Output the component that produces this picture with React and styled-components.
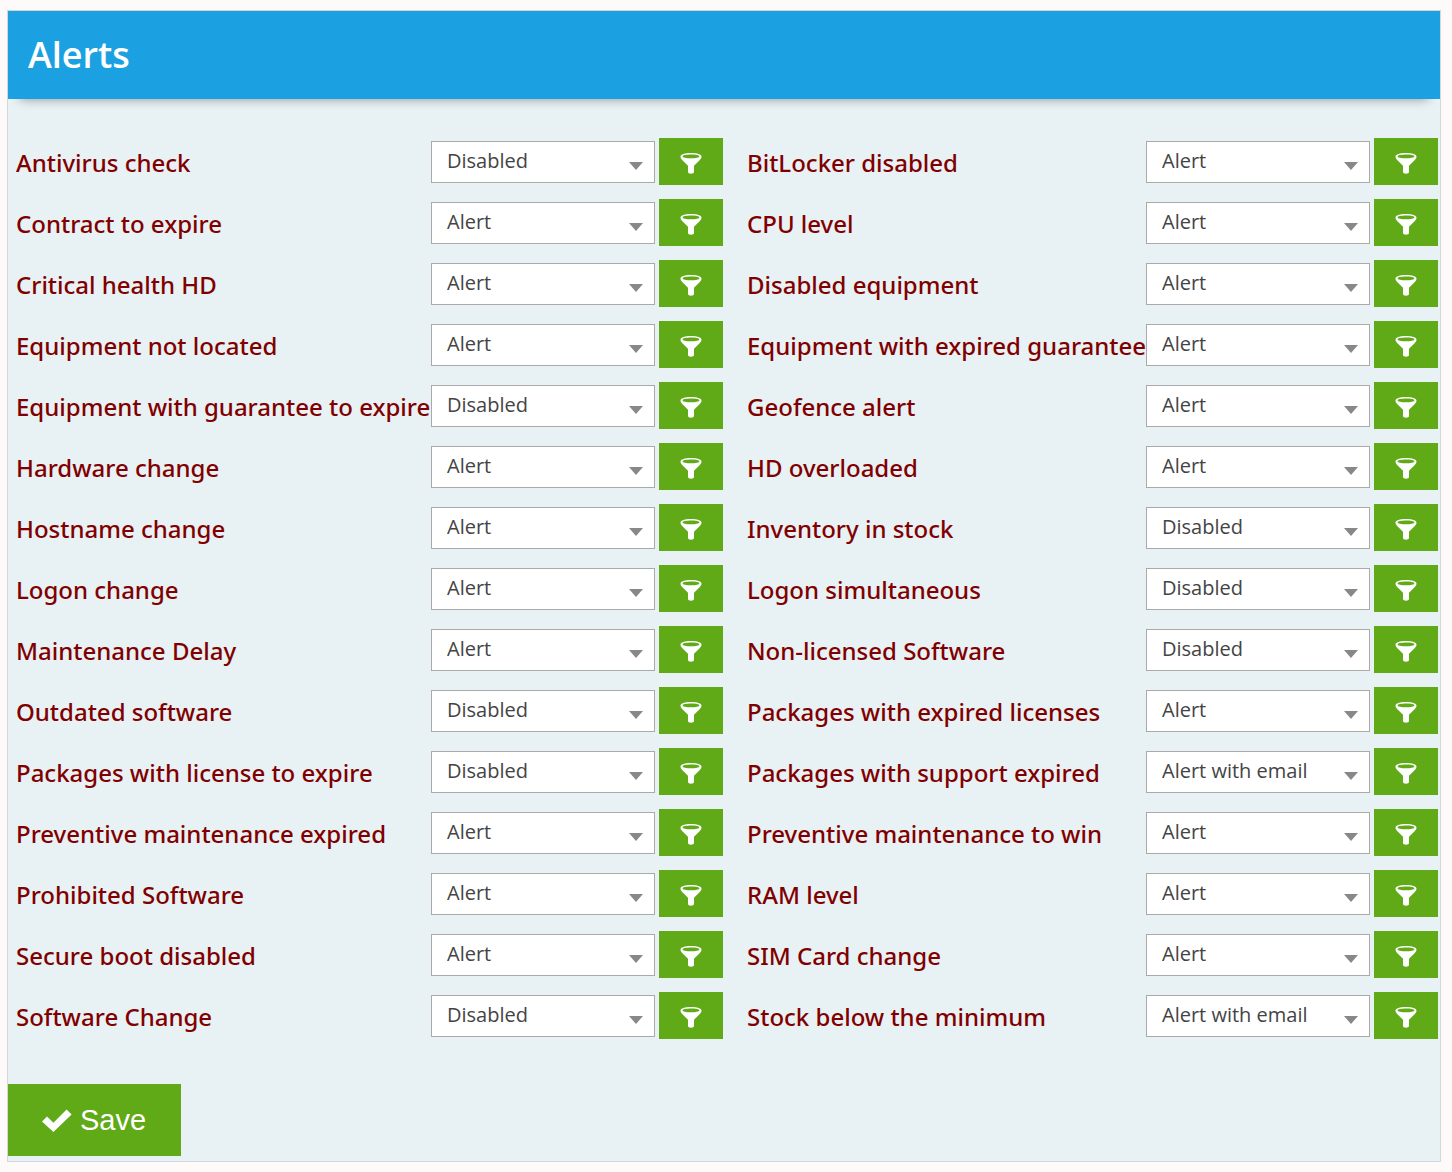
import React, { useState } from "react";
import styled, { createGlobalStyle } from "styled-components";

const OPTIONS = ["Disabled", "Alert", "Alert with email"];

const ALERTS = [
  { label: "Antivirus check", value: "Disabled" },
  { label: "BitLocker disabled", value: "Alert" },
  { label: "Contract to expire", value: "Alert" },
  { label: "CPU level", value: "Alert" },
  { label: "Critical health HD", value: "Alert" },
  { label: "Disabled equipment", value: "Alert" },
  { label: "Equipment not located", value: "Alert" },
  { label: "Equipment with expired guarantee", value: "Alert" },
  { label: "Equipment with guarantee to expire", value: "Disabled" },
  { label: "Geofence alert", value: "Alert" },
  { label: "Hardware change", value: "Alert" },
  { label: "HD overloaded", value: "Alert" },
  { label: "Hostname change", value: "Alert" },
  { label: "Inventory in stock", value: "Disabled" },
  { label: "Logon change", value: "Alert" },
  { label: "Logon simultaneous", value: "Disabled" },
  { label: "Maintenance Delay", value: "Alert" },
  { label: "Non-licensed Software", value: "Disabled" },
  { label: "Outdated software", value: "Disabled" },
  { label: "Packages with expired licenses", value: "Alert" },
  { label: "Packages with license to expire", value: "Disabled" },
  { label: "Packages with support expired", value: "Alert with email" },
  { label: "Preventive maintenance expired", value: "Alert" },
  { label: "Preventive maintenance to win", value: "Alert" },
  { label: "Prohibited Software", value: "Alert" },
  { label: "RAM level", value: "Alert" },
  { label: "Secure boot disabled", value: "Alert" },
  { label: "SIM Card change", value: "Alert" },
  { label: "Software Change", value: "Disabled" },
  { label: "Stock below the minimum", value: "Alert with email" },
];

const FunnelIcon = () => (
  <svg width="22" height="22" viewBox="0 0 22 22" aria-hidden="true">
    <path
      fill="#fff"
      fillRule="evenodd"
      d="M11 1C17 1 21.5 2.4 21.5 4.6C21.5 6 20.8 7 19.6 8.2L14 13.8V20C14 21.2 12.6 21.7 11 21.7C9.4 21.7 8 21.2 8 20V13.8L2.4 8.2C1.2 7 0.5 6 0.5 4.6C0.5 2.4 5 1 11 1ZM11 2.6C6.2 2.6 2.6 3.4 2.6 4.4C2.6 5.4 6.2 6.2 11 6.2C15.8 6.2 19.4 5.4 19.4 4.4C19.4 3.4 15.8 2.6 11 2.6Z"
    />
  </svg>
);

const CheckIcon = () => (
  <svg width="30" height="24" viewBox="0 0 30 24" aria-hidden="true">
    <path fill="#fff" d="M0 13.5L5 8.5L11.4 14.8L24.6 1.6L29.6 6.6L11.4 24Z" />
  </svg>
);

const AlertRow = ({ label, initialValue }) => {
  const [value, setValue] = useState(initialValue);
  const id = label.toLowerCase().replace(/\s+/g, "-");

  return (
    <Row>
      <Label htmlFor={id}>{label}</Label>
      <SelectWrapper>
        <Select id={id} value={value} onChange={(e) => setValue(e.target.value)}>
          {OPTIONS.map((option) => (
            <option key={option}>{option}</option>
          ))}
        </Select>
        <Arrow />
      </SelectWrapper>
      <FilterButton type="button" aria-label={`Filter ${label}`}>
        <FunnelIcon />
      </FilterButton>
    </Row>
  );
};

const App = () => {
  return (
    <>
      <GlobalStyle />
      <Panel>
        <Header>
          <Title>Alerts</Title>
        </Header>
        <form onSubmit={(e) => e.preventDefault()}>
          <AlertsGrid>
            {ALERTS.map(({ label, value }) => (
              <AlertRow key={label} label={label} initialValue={value} />
            ))}
          </AlertsGrid>
          <SaveButton type="submit">
            <CheckIcon />
            Save
          </SaveButton>
        </form>
      </Panel>
    </>
  );
};

export default App;

const GlobalStyle = createGlobalStyle`
  * {
    box-sizing: border-box;
  }
  body {
    margin: 0;
    background-color: #fffafa;
    font-family: "Open Sans", "Noto Sans", sans-serif;
  }
`;

const Panel = styled.main`
  margin: 10px 11px 10px 7px;
  padding-bottom: 5px;
  border: 1px solid #d3d6d9;
  background-color: #e8f1f4;
`;

const Header = styled.header`
  display: flex;
  align-items: center;
  height: 88px;
  padding: 0 20px;
  background-color: #1ba1e2;
  box-shadow: 0 12px 10px -12px rgba(0, 0, 0, 0.4);
`;

const Title = styled.h1`
  margin: 0;
  color: #fff;
  font-size: 36px;
  font-weight: 600;
  line-height: 48px;
`;

const AlertsGrid = styled.div`
  display: grid;
  grid-template-columns: 707fr 691fr;
  gap: 14px 24px;
  padding: 39px 2px 45px 8px;
`;

const Row = styled.div`
  display: grid;
  grid-template-columns: minmax(0, 1fr) 224px 64px;
  align-items: center;
  column-gap: 4px;
`;

const Label = styled.label`
  padding-top: 2px;
  color: #800000;
  font-family: "Noto Sans", sans-serif;
  font-size: 24px;
  font-weight: 500;
  line-height: 32px;
  white-space: nowrap;
`;

const SelectWrapper = styled.div`
  position: relative;
`;

const Select = styled.select`
  display: block;
  width: 100%;
  height: 42px;
  padding: 0 40px 2px 15px;
  appearance: none;
  border: 1px solid #aaa;
  border-radius: 0;
  background-color: #fff;
  color: #444;
  font-family: inherit;
  font-size: 20px;
  font-weight: 400;
`;

const Arrow = styled.span`
  position: absolute;
  top: 21px;
  right: 12px;
  border: 7px solid transparent;
  border-top: 8px solid #888;
  border-bottom: 0;
  pointer-events: none;
`;

const FilterButton = styled.button`
  display: flex;
  align-items: center;
  justify-content: center;
  height: 47px;
  padding: 3px 0 0;
  border: none;
  background-color: #60a917;
  cursor: pointer;
`;

const SaveButton = styled.button`
  display: flex;
  align-items: center;
  gap: 8px;
  height: 72px;
  padding: 0 35px 0 34px;
  border: none;
  background-color: #60a917;
  color: #fff;
  font-family: "Liberation Sans", sans-serif;
  font-size: 29px;
  cursor: pointer;
`;
